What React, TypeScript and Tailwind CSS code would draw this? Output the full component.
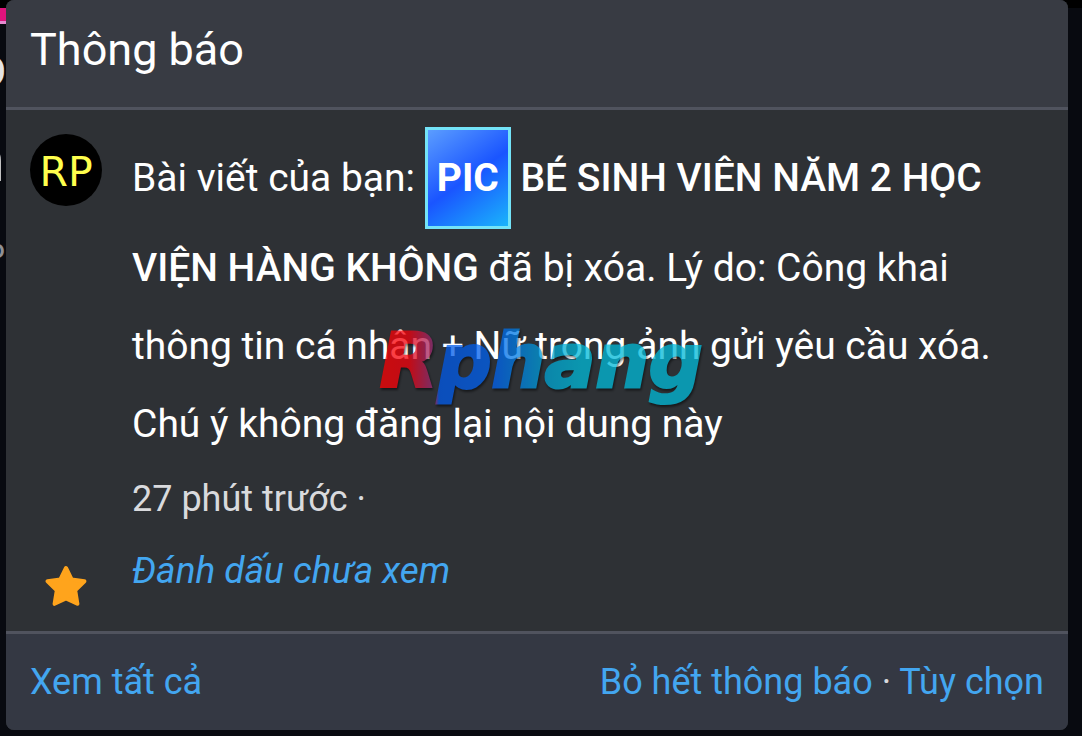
function Avatar() {
  return (
    <div
      aria-label="RP"
      className="flex size-[72px] items-center justify-center rounded-full bg-black pt-1 font-['DejaVu_Sans',sans-serif] text-[41px] leading-none text-[#ffff4d]"
    >
      RP
    </div>
  );
}

function Star() {
  return (
    <svg viewBox="0 0 42 42" className="size-[42px]" aria-hidden="true">
      <path
        d="M21 3 L26.6 14.4 L39.4 16.2 L30.2 25.2 L32.4 38.8 L21 33.4 L9.6 38.8 L11.8 25.2 L2.6 16.2 L15.4 14.4 Z"
        fill="#ffa41c"
        stroke="#ffa41c"
        strokeWidth="4"
        strokeLinejoin="round"
      />
    </svg>
  );
}

function PageEdge() {
  return (
    <div aria-hidden="true" className="absolute inset-0 overflow-hidden">
      <div className="h-2 bg-black" />
      <div className="h-4 w-[6px] border-b-[3px] border-[#e58bd0] bg-[#e0137c]" />
      <div className="absolute top-[47px] left-[-23px] text-[42px] leading-[50px] font-medium text-[#e4e4e4]">O</div>
      <div className="absolute top-[129px] left-[-30px] text-[62px] leading-[62px] font-medium text-[#e4e4e4]">n</div>
      <div className="absolute top-[234px] left-[-10px] text-[26px] leading-[30px] font-medium text-[#8f9095]">o</div>
    </div>
  );
}

export default function App() {
  return (
    <div className="relative min-h-screen overflow-hidden bg-[#080a10] pr-[14px] pb-[6px] pl-[6px] font-['Roboto',sans-serif] text-white">
      <PageEdge />
      <section className="relative overflow-hidden rounded-lg bg-[#2e3135]">
        <header className="border-b-[3px] border-[#50535e] bg-[#383b43] px-6 pt-[22px] pb-[29px]">
          <h1 className="text-[45px] leading-[56px]">Thông báo</h1>
        </header>

        <article className="relative flex gap-[30px] px-6 pt-[17px] pb-6">
          <div className="flex shrink-0 flex-col items-center justify-between pt-[7px]">
            <Avatar />
            <Star />
          </div>
          <div className="min-w-0 flex-1">
            <p className="text-[39px] leading-[78px]">
              Bài viết của bạn:{" "}
              <b className="inline-block border-[3px] border-[#73e3f8] bg-linear-[145deg,#5b9dff_0%,#1a55ff_50%,#1ab4fb_100%] px-[9px] py-[9px] font-bold">
                PIC
              </b>{" "}
              <b className="font-medium">BÉ SINH VIÊN NĂM 2 HỌC VIỆN HÀNG KHÔNG</b> đã bị xóa. Lý do: Công khai
              thông tin cá nhân + Nữ trong ảnh gửi yêu cầu xóa. Chú ý không đăng lại nội dung này
            </p>
            <p className="text-[36px] leading-[72px] text-[#d9dadd]">
              <time>27 phút trước</time> ·
            </p>
            <p className="text-[37px] leading-[72px] text-[#43a6f0] italic">
              <a href="#unread">Đánh dấu chưa xem</a>
            </p>
          </div>
          <div className="pointer-events-none absolute top-[207px] left-[370px] bg-linear-[90deg,#ff0000_0%,#f4000c_10%,#8a3080_18%,#0058e8_19%,#0062f0_36%,#00a4d2_52%,#00b9d8_62%,#00b9d8_100%] bg-clip-text px-1 font-['DejaVu_Sans',sans-serif] text-[75px] leading-[88px] font-bold text-transparent italic opacity-75 drop-shadow-[1px_2px_1px_#000000aa] [-webkit-text-stroke:3px_transparent]">
            Rphang
          </div>
        </article>

        <footer className="flex items-center justify-between border-t-[3px] border-[#50535e] bg-[#343843] px-6 py-6 text-[36px] leading-[48px] text-[#43a6f0]">
          <a href="#all">Xem tất cả</a>
          <div>
            <a href="#clear">Bỏ hết thông báo</a> <span className="text-[#d9dadd]">·</span>{" "}
            <a href="#options">Tùy chọn</a>
          </div>
        </footer>
      </section>
    </div>
  );
}
